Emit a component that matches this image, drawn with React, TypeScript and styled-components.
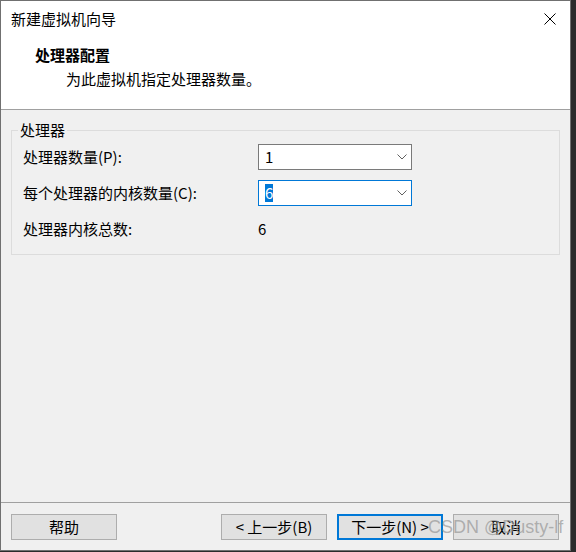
import React from 'react';
import styled, { createGlobalStyle } from 'styled-components';

const Global = createGlobalStyle`
  html, body { margin: 0; padding: 0; background: #2b2b2b; }
  body { font-family: "Noto Sans CJK SC", "Noto Sans", sans-serif; }
  #root { width: 576px; height: 552px; }
`;

const Window = styled.div`
  position: relative;
  width: 571px;
  height: 551px;
  box-sizing: border-box;
  border: 1px solid #707070;
  background: #f0f0f0;
  display: flex;
  flex-direction: column;
  font-size: 15px;
  color: #000;
`;

const TitleBar = styled.div`
  height: 35px;
  flex: none;
  background: #fff;
  display: flex;
  align-items: center;
  justify-content: space-between;
  padding: 0 14px 0 10px;
  line-height: 20px;
`;

const CloseButton = styled.div`
  width: 12px;
  height: 12px;
  display: flex;
`;

const Header = styled.div`
  height: 74px;
  flex: none;
  box-sizing: border-box;
  background: #fff;
  border-bottom: 1px solid #a0a0a0;
  padding: 9px 0 0 34px;
  display: flex;
  flex-direction: column;
  gap: 4px;
  line-height: 20px;
`;

const HeaderTitle = styled.div`
  font-weight: bold;
`;

const HeaderSub = styled.div`
  padding-left: 31px;
`;

const Body = styled.div`
  flex: 1;
  padding: 20px 10px 0 10px;
`;

const GroupBox = styled.div`
  border: 1px solid #dcdcdc;
  padding: 0 11px 12px 11px;
`;

const GroupTitle = styled.div`
  width: fit-content;
  margin: -11px 0 4px -5px;
  padding: 0 2px;
  background: #f0f0f0;
  line-height: 20px;
`;

const FormGrid = styled.div`
  display: grid;
  grid-template-columns: 235px 154px;
  grid-auto-rows: 26px;
  row-gap: 10px;
  align-items: center;
  line-height: 20px;
`;

const Combo = styled.div<{ $focused?: boolean }>`
  box-sizing: border-box;
  width: 154px;
  height: 26px;
  background: #fff;
  border: 1px solid ${(p) => (p.$focused ? '#0078d7' : '#7a7a7a')};
  display: flex;
  align-items: center;
  justify-content: space-between;
  padding: 0 4px 0 6px;
`;

const Selected = styled.span`
  background: #0078d7;
  color: #fff;
  line-height: 18px;
`;

const Footer = styled.div`
  flex: none;
  border-top: 1px solid #a0a0a0;
  padding: 11px 11px 10px 10px;
  display: flex;
  align-items: center;
`;

const NavGroup = styled.div`
  margin-left: auto;
  display: flex;
  gap: 10px;
`;

const Button = styled.button<{ $default?: boolean }>`
  box-sizing: border-box;
  width: 106px;
  height: 26px;
  padding: 0;
  margin: 0;
  font-family: inherit;
  font-size: 15px;
  color: #000;
  background: #e1e1e1;
  border: 1px solid ${(p) => (p.$default ? '#0078d7' : '#adadad')};
  box-shadow: ${(p) => (p.$default ? 'inset 0 0 0 1px #0078d7' : 'none')};
  line-height: 20px;
`;

const Watermark = styled.div`
  position: absolute;
  left: 427px;
  top: 516px;
  font-family: "Liberation Sans", Arial, sans-serif;
  font-size: 18px;
  line-height: 20px;
  color: rgba(150, 150, 150, 0.7);
  pointer-events: none;
  white-space: nowrap;
`;

const Chevron = () => (
  <svg width="10" height="6" viewBox="0 0 10 6">
    <polyline points="0.5,0.5 5,5 9.5,0.5" fill="none" stroke="#606060" strokeWidth="1" />
  </svg>
);

export default function App() {
  return (
    <>
      <Global />
      <Window>
        <TitleBar>
          <span>新建虚拟机向导</span>
          <CloseButton>
            <svg width="12" height="12" viewBox="0 0 12 12">
              <path d="M0.5 0.5 L11.5 11.5 M11.5 0.5 L0.5 11.5" stroke="#000" strokeWidth="1" />
            </svg>
          </CloseButton>
        </TitleBar>
        <Header>
          <HeaderTitle>处理器配置</HeaderTitle>
          <HeaderSub>为此虚拟机指定处理器数量。</HeaderSub>
        </Header>
        <Body>
          <GroupBox>
            <GroupTitle>处理器</GroupTitle>
            <FormGrid>
              <span>处理器数量(P):</span>
              <Combo>
                <span>1</span>
                <Chevron />
              </Combo>
              <span>每个处理器的内核数量(C):</span>
              <Combo $focused>
                <Selected>6</Selected>
                <Chevron />
              </Combo>
              <span>处理器内核总数:</span>
              <span>6</span>
            </FormGrid>
          </GroupBox>
        </Body>
        <Footer>
          <Button>帮助</Button>
          <NavGroup>
            <Button>&lt; 上一步(B)</Button>
            <Button $default>下一步(N) &gt;</Button>
            <Button>取消</Button>
          </NavGroup>
        </Footer>
        <Watermark>CSDN @Dusty-lf</Watermark>
      </Window>
    </>
  );
}
